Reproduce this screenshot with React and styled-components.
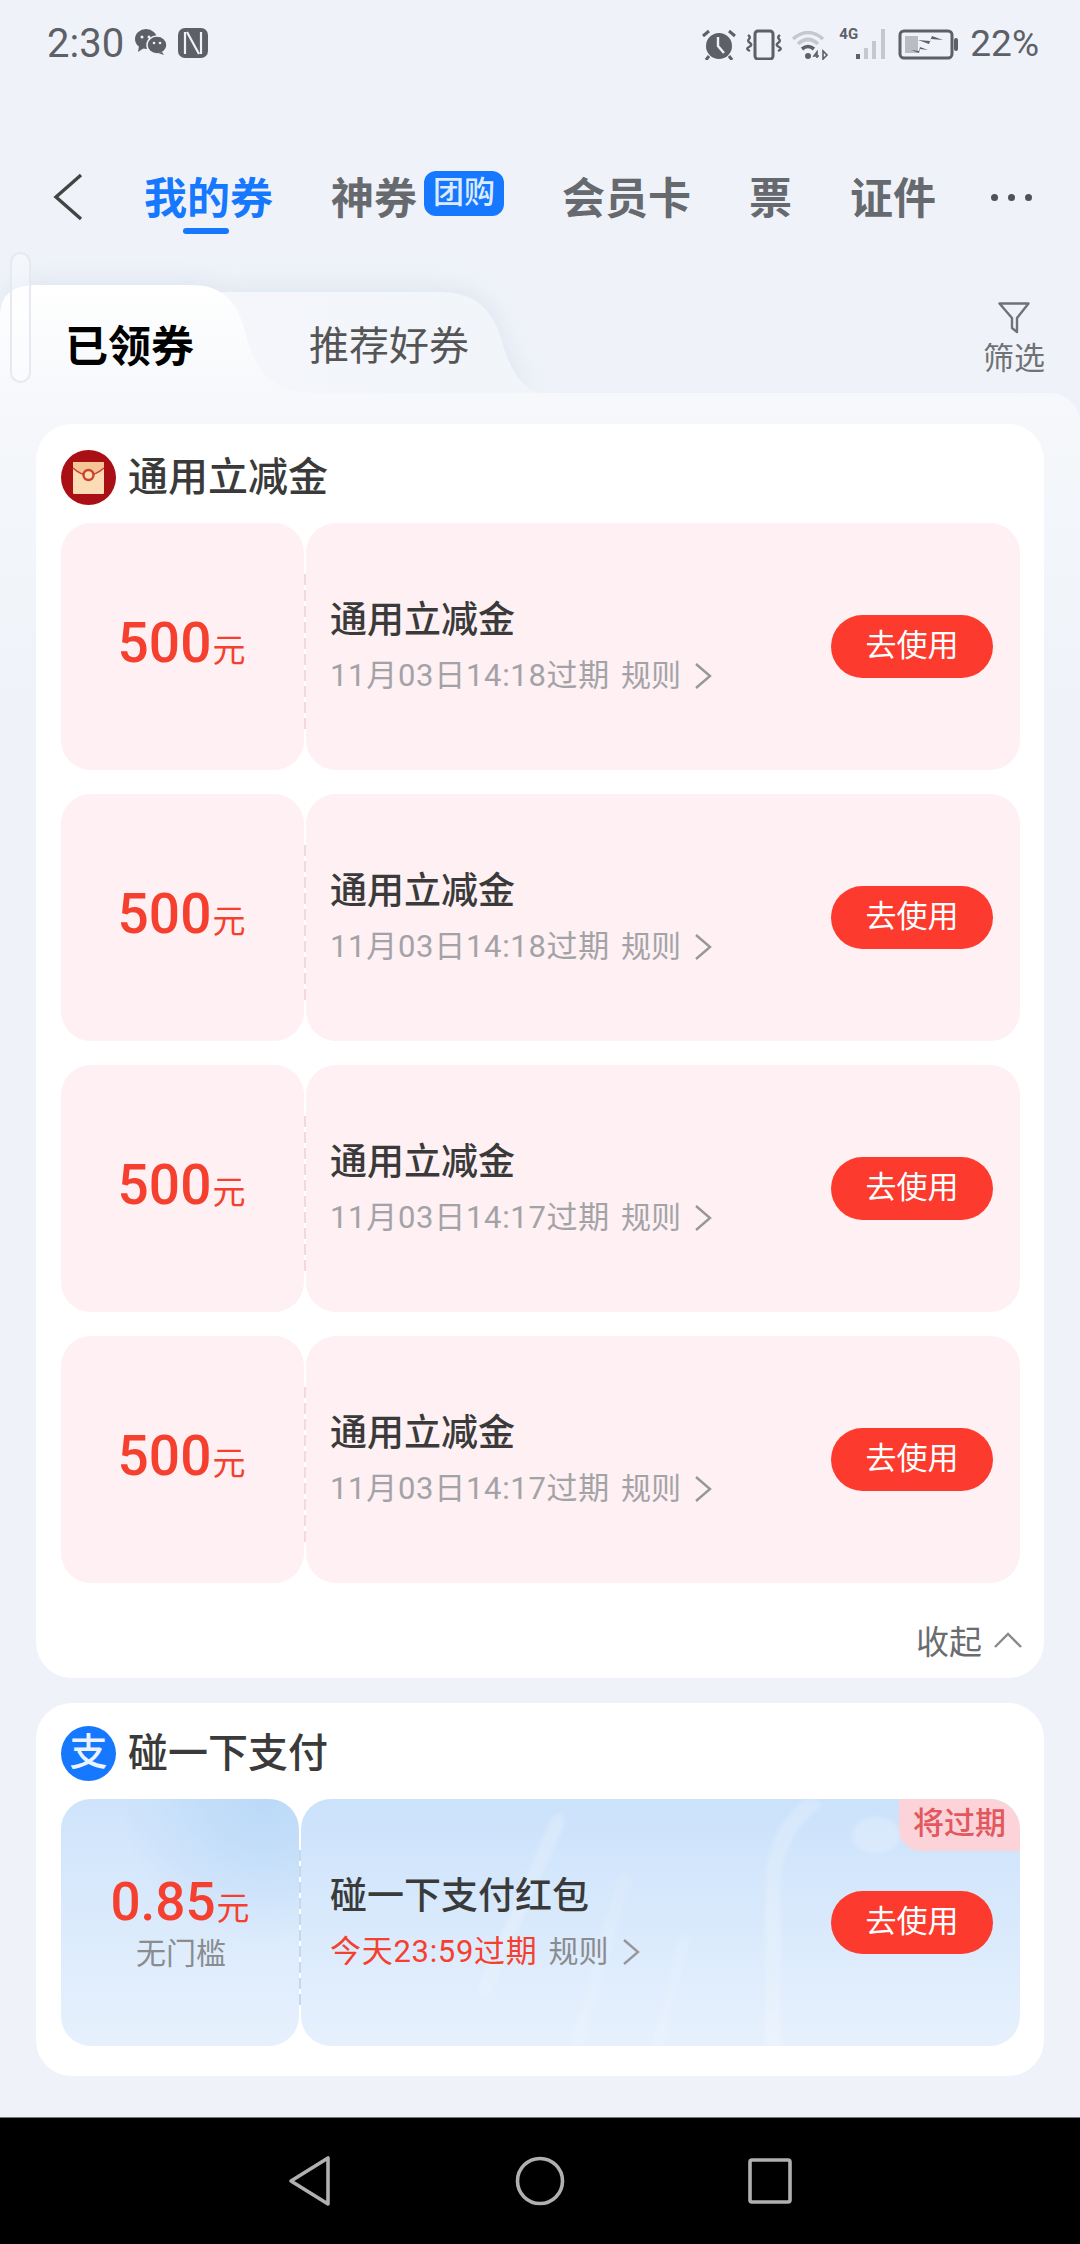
import styled, { createGlobalStyle } from "styled-components";

const coupons = [
  { id: 1, expires: "11月03日14:18过期" },
  { id: 2, expires: "11月03日14:18过期" },
  { id: 3, expires: "11月03日14:17过期" },
  { id: 4, expires: "11月03日14:17过期" },
];

const App = () => {
  return (
    <Page>
      <GlobalStyle />
      <ScrollPill />
      <StatusBar>
        <Time>2:30</Time>
        <WeChatIcon viewBox="0 0 34 26">
          <ellipse cx="12" cy="10" rx="11" ry="10" fill="#5d6066" />
          <path d="M5 17l-1 6 6-4z" fill="#5d6066" />
          <ellipse cx="23" cy="16" rx="10" ry="9" fill="#5d6066" stroke="#eff3f9" strokeWidth="1.5" />
          <path d="M28 23l2 3-6-2z" fill="#5d6066" />
          <circle cx="8" cy="8" r="1.5" fill="#eff3f9" />
          <circle cx="15" cy="8" r="1.5" fill="#eff3f9" />
          <circle cx="20" cy="14" r="1.3" fill="#eff3f9" />
          <circle cx="26" cy="14" r="1.3" fill="#eff3f9" />
        </WeChatIcon>
        <NfcIcon viewBox="0 0 30 30">
          <rect width="30" height="30" rx="7" fill="#5d6066" />
          <path d="M7 4v22M23 4v22M9 4l12 22" fill="none" stroke="#eff3f9" strokeWidth="2.2" />
        </NfcIcon>
        <StatusRight>
          <svg width="34" height="31" viewBox="0 0 34 31">
            <circle cx="17" cy="17" r="13" fill="#5d6066" />
            <path d="M16 8v9l6 7" fill="none" stroke="#eff3f9" strokeWidth="2.4" />
            <path d="M1 7l6-5M33 7l-6-5M7 27l-3 4M27 27l3 4" stroke="#5d6066" strokeWidth="3" />
          </svg>
          <svg width="38" height="31" viewBox="0 0 38 31">
            <rect x="10" y="2" width="18" height="28" rx="3" fill="none" stroke="#5d6066" strokeWidth="3" />
            <path d="M3 6q3 2 1 4t1 4-1 4 1 4M35 6q-3 2-1 4t-1 4 1 4-1 4" fill="none" stroke="#5d6066" strokeWidth="2.4" />
          </svg>
          <svg width="38" height="31" viewBox="0 0 38 31">
            <path d="M1 10q15-13 30 0M6 15q10-9 20 0" fill="none" stroke="#c5c8cd" strokeWidth="3.6" />
            <path d="M10 20q6-5 12 0" fill="none" stroke="#5d6066" strokeWidth="3.6" />
            <circle cx="16" cy="27" r="3" fill="#5d6066" />
            <path d="M25 29v-6l-3 4h5M31 22v8l4-4z" fill="none" stroke="#5d6066" strokeWidth="1.6" />
          </svg>
          <Signal>
            <NetLabel>4G</NetLabel>
            <svg width="33" height="32" viewBox="0 0 33 32">
              <rect x="0" y="26" width="4" height="5" fill="#5d6066" />
              <rect x="8" y="20" width="4" height="11" fill="#c5c8cd" />
              <rect x="16" y="13" width="4" height="18" fill="#c5c8cd" />
              <rect x="25" y="1" width="4" height="30" fill="#c5c8cd" />
            </svg>
          </Signal>
          <svg width="60" height="31" viewBox="0 0 60 31">
            <rect x="2" y="2" width="52" height="27" rx="4" fill="none" stroke="#5d6066" strokeWidth="3" />
            <rect x="7" y="7" width="13" height="17" fill="#b9bcc1" />
            <path d="M20 11l12 1 2-5 11 4-12-1-2 5zM13 21l8 1 1-4 8 3-8-1-1 4z" fill="#5d6066" />
            <rect x="56" y="9" width="4" height="13" rx="2" fill="#5d6066" />
          </svg>
          <Percent>22%</Percent>
        </StatusRight>
      </StatusBar>

      <TopNav>
        <BackIcon width="32" height="48" viewBox="0 0 32 48">
          <path d="M29 2L4 24l25 22" fill="none" stroke="#444" strokeWidth="3.4" />
        </BackIcon>
        <TopTab $active>
          我的券
          <TopTabLine />
        </TopTab>
        <TopTabGroup>
          <TopTab>神券</TopTab>
          <Badge>团购</Badge>
        </TopTabGroup>
        <TopTab>会员卡</TopTab>
        <TopTab>票</TopTab>
        <TopTab>证件</TopTab>
        <MoreDots>
          <span />
          <span />
          <span />
        </MoreDots>
      </TopNav>

      <TabStrip>
        <TabShapes viewBox="0 0 560 108" width="560" height="108">
          <defs>
            <linearGradient id="activeTab" x1="0" y1="0" x2="0" y2="1">
              <stop offset="0" stopColor="#ffffff" />
              <stop offset="1" stopColor="#f6f8fb" />
            </linearGradient>
            <linearGradient id="idleTab" x1="0" y1="0" x2="1" y2="0">
              <stop offset="0" stopColor="#f5f7fb" />
              <stop offset="1" stopColor="#f1f4f9" />
            </linearGradient>
          </defs>
          <path d="M160 108V7H440C470 7 490 20 500 50C510 85 522 108 545 108Z" fill="url(#idleTab)" />
          <path d="M0 108V28Q2 0 36 0H190C225 0 238 18 246 50C256 90 275 108 318 108Z" fill="url(#activeTab)" />
        </TabShapes>
        <SubTab $active>已领券</SubTab>
        <SubTab>推荐好券</SubTab>
        <Filter>
          <svg width="32" height="32" viewBox="0 0 32 32">
            <path d="M1.5 1.5h29L19 16v14l-5-4V16z" fill="none" stroke="#707276" strokeWidth="2.4" strokeLinejoin="round" />
          </svg>
          <FilterLabel>筛选</FilterLabel>
        </Filter>
      </TabStrip>

      <Content>
        <Card $top={26} $bottom={0}>
          <CardHeader>
            <svg width="55" height="55" viewBox="0 0 55 55">
              <circle cx="27.5" cy="27.5" r="27.5" fill="#a90f14" />
              <rect x="12" y="12" width="31" height="32" rx="1" fill="#fbdcb6" />
              <path d="M12 18q15 14 31 0v-6H12z" fill="#f6c596" />
              <path d="M12 18q15 14 31 0" fill="none" stroke="#c8442c" strokeWidth="1.5" />
              <circle cx="27.5" cy="25" r="5" fill="#fbdcb6" stroke="#c8442c" strokeWidth="2.4" />
            </svg>
            <CardTitle>通用立减金</CardTitle>
          </CardHeader>
          <CouponList>
            {coupons.map((item) => {
              return (
                <Coupon key={item.id}>
                  <Amount $width={243}>
                    <AmountRow>
                      <Value>500</Value>
                      <Unit>元</Unit>
                    </AmountRow>
                  </Amount>
                  <Detail>
                    <DetailText>
                      <DetailTitle>通用立减金</DetailTitle>
                      <MetaRow>
                        <Expires>{item.expires}</Expires>
                        <Rule>规则</Rule>
                        <Chevron />
                      </MetaRow>
                    </DetailText>
                    <UseButton>去使用</UseButton>
                  </Detail>
                </Coupon>
              );
            })}
          </CouponList>
          <CollapseRow>
            <span>收起</span>
            <svg width="30" height="18" viewBox="0 0 30 18">
              <path d="M2 16L15 3l13 13" fill="none" stroke="#8a8a8c" strokeWidth="2.4" />
            </svg>
          </CollapseRow>
        </Card>

        <Card $top={23} $bottom={30}>
          <CardHeader>
            <AlipayMark>支</AlipayMark>
            <CardTitle>碰一下支付</CardTitle>
          </CardHeader>
          <Coupon>
            <Amount $width={238} $blue>
              <AmountRow>
                <Value $small>0.85</Value>
                <Unit>元</Unit>
              </AmountRow>
              <Threshold>无门槛</Threshold>
            </Amount>
            <Detail $blue>
              <Streaks viewBox="0 0 720 248" width="720" height="248">
                <path d="M257 22L184 190" stroke="#fff" strokeOpacity=".2" strokeWidth="14" strokeLinecap="round" fill="none" />
                <path d="M323 82L277 240" stroke="#fff" strokeOpacity=".12" strokeWidth="14" strokeLinecap="round" fill="none" />
                <path d="M383 142L357 244" stroke="#fff" strokeOpacity=".12" strokeWidth="12" strokeLinecap="round" fill="none" />
                <path d="M516 0Q476 30 472 80V248" stroke="#fff" strokeOpacity=".2" strokeWidth="16" fill="none" />
                <ellipse cx="575" cy="36" rx="24" ry="18" fill="#fff" fillOpacity=".22" />
              </Streaks>
              <DetailText>
                <DetailTitle>碰一下支付红包</DetailTitle>
                <MetaRow>
                  <Expires $urgent>今天23:59过期</Expires>
                  <Rule $dark>规则</Rule>
                  <Chevron />
                </MetaRow>
              </DetailText>
              <UseButton>去使用</UseButton>
              <ExpiryTag>将过期</ExpiryTag>
            </Detail>
          </Coupon>
        </Card>
      </Content>

      <SystemBar>
        <svg width="44" height="52" viewBox="0 0 44 52">
          <path d="M40 3v46L3 26z" fill="none" stroke="#b0b0b0" strokeWidth="3.6" strokeLinejoin="round" />
        </svg>
        <svg width="50" height="50" viewBox="0 0 50 50">
          <circle cx="25" cy="25" r="22.5" fill="none" stroke="#b0b0b0" strokeWidth="3.6" />
        </svg>
        <svg width="44" height="46" viewBox="0 0 44 46">
          <rect x="2" y="2" width="40" height="42" rx="2" fill="none" stroke="#b0b0b0" strokeWidth="3.6" />
        </svg>
      </SystemBar>
    </Page>
  );
};

const GlobalStyle = createGlobalStyle`
  html, body {
    margin: 0;
    padding: 0;
    background: #eff3f9;
  }
  * {
    box-sizing: border-box;
  }
`;

const fontStack = `Roboto, "Noto Sans CJK SC", sans-serif`;

const Page = styled.div`
  position: relative;
  display: flex;
  flex-direction: column;
  width: 1080px;
  height: 2244px;
  overflow: hidden;
  background: #eff3f9;
  font-family: ${fontStack};
`;

const ScrollPill = styled.div`
  position: absolute;
  left: 10px;
  top: 252px;
  width: 21px;
  height: 131px;
  border: 2px solid #e6e9ef;
  border-radius: 11px;
  background: rgba(255, 255, 255, 0.35);
  z-index: 2;
`;

const StatusBar = styled.div`
  display: flex;
  align-items: center;
  height: 88px;
  padding: 0 41px 0 47px;
  color: #5d6066;
`;

const Time = styled.div`
  font-size: 40px;
  line-height: 40px;
  margin-right: 10px;
`;

const WeChatIcon = styled.svg`
  width: 34px;
  height: 26px;
  margin: -4px 10px 0 0;
`;

const NfcIcon = styled.svg`
  width: 30px;
  height: 30px;
  margin-top: -2px;
`;

const StatusRight = styled.div`
  display: flex;
  align-items: center;
  gap: 9px;
  margin-left: auto;
`;

const Signal = styled.div`
  position: relative;
  width: 50px;
  display: flex;
  justify-content: flex-end;
`;

const NetLabel = styled.span`
  position: absolute;
  left: 0;
  top: -3px;
  font-size: 15px;
  line-height: 18px;
  font-weight: 700;
`;

const Percent = styled.div`
  font-size: 37px;
  line-height: 40px;
  margin-left: 3px;
`;

const TopNav = styled.div`
  display: flex;
  align-items: center;
  gap: 58px;
  height: 100px;
  margin-top: 62px;
  padding: 0 0 2px 52px;
`;

const BackIcon = styled.svg`
  margin-top: -4px;
`;

const TopTabGroup = styled.div`
  display: flex;
  align-items: center;
  gap: 7px;
`;

const TopTab = styled.div`
  position: relative;
  margin-left: ${(props) => (props.$active ? "2px" : "0")};
  font-size: 43px;
  line-height: 50px;
  font-weight: 700;
  color: ${(props) => (props.$active ? "#1677ff" : "#666a6e")};
`;

const TopTabLine = styled.div`
  position: absolute;
  left: 39px;
  top: 54px;
  width: 46px;
  height: 6px;
  border-radius: 3px;
  background: #1677ff;
`;

const Badge = styled.div`
  width: 80px;
  height: 45px;
  margin-top: -11px;
  border-radius: 12px;
  background: #1677ff;
  color: #dcebff;
  font-size: 31px;
  line-height: 43px;
  font-weight: 500;
  text-align: center;
`;

const MoreDots = styled.div`
  display: flex;
  gap: 10px;
  margin-left: -3px;
  margin-top: -4px;

  span {
    width: 7px;
    height: 7px;
    border-radius: 50%;
    background: #4f5257;
  }
`;

const TabStrip = styled.div`
  position: relative;
  display: flex;
  align-items: center;
  gap: 115px;
  height: 108px;
  margin-top: 35px;
  padding: 16px 35px 0 65px;
`;

const TabShapes = styled.svg`
  position: absolute;
  left: 0;
  top: 0;
  filter: drop-shadow(2px -6px 12px rgba(165, 178, 205, 0.18));
`;

const SubTab = styled.div`
  position: relative;
  font-size: ${(props) => (props.$active ? "43px" : "40px")};
  line-height: 50px;
  font-weight: ${(props) => (props.$active ? 700 : 400)};
  color: ${(props) => (props.$active ? "#000" : "#555")};
`;

const Filter = styled.div`
  position: relative;
  align-self: flex-start;
  display: flex;
  flex-direction: column;
  align-items: center;
  gap: 5px;
  margin-left: auto;
  margin-top: 1px;
`;

const FilterLabel = styled.div`
  font-size: 31px;
  line-height: 40px;
  color: #707276;
`;

const Content = styled.div`
  flex: 1;
  position: relative;
  display: flex;
  flex-direction: column;
  gap: 25px;
  padding: 31px 36px 0;
  background: linear-gradient(#f6f8fb, #eff3f9 300px);
  border-radius: 0 30px 0 0;
`;

const Card = styled.div`
  padding: ${(props) => props.$top}px 24px ${(props) => props.$bottom}px 25px;
  border-radius: 36px;
  background: #fff;
`;

const CardHeader = styled.div`
  display: flex;
  align-items: center;
  gap: 12px;
  height: 55px;
  margin-bottom: 18px;
`;

const CardTitle = styled.div`
  font-size: 40px;
  line-height: 50px;
  font-weight: 500;
  color: #3a3a3a;
`;

const AlipayMark = styled.div`
  width: 55px;
  height: 55px;
  border-radius: 50%;
  background: #1677ff;
  color: #eaf3ff;
  font-size: 38px;
  line-height: 52px;
  font-weight: 500;
  text-align: center;
`;

const CouponList = styled.div`
  display: flex;
  flex-direction: column;
  gap: 24px;
`;

const Coupon = styled.div`
  display: flex;
  gap: 2px;
  height: 247px;
`;

const Amount = styled.div`
  position: relative;
  display: flex;
  flex-direction: column;
  align-items: center;
  justify-content: center;
  width: ${(props) => props.$width}px;
  padding: 0 ${(props) => (props.$blue ? "0" : "2px")} ${(props) => (props.$blue ? "0" : "8px")} 0;
  border-radius: 30px;
  background: ${(props) =>
    props.$blue
      ? "radial-gradient(circle at 85% 0, #bbd9f8, transparent 45%), linear-gradient(#cfe4fb, #e7f1fd)"
      : "#fef0f3"};

  &::after {
    content: "";
    position: absolute;
    right: -2px;
    top: 51px;
    width: 2px;
    height: 155px;
    background: repeating-linear-gradient(
      ${(props) => (props.$blue ? "#c5d8ec" : "#f3d9de")} 0 11px,
      transparent 11px 16px
    );
  }
`;

const AmountRow = styled.div`
  display: flex;
  align-items: baseline;
  color: #f5402f;
`;

const Value = styled.span`
  font-size: ${(props) => (props.$small ? "53px" : "55px")};
  line-height: 60px;
  font-weight: 500;
`;

const Unit = styled.span`
  font-size: 33px;
  line-height: 40px;
  margin-left: 1px;
`;

const Threshold = styled.div`
  margin: 2px 0 0 2px;
  font-size: 30px;
  line-height: 40px;
  color: #8a8c90;
`;

const Detail = styled.div`
  position: relative;
  flex: 1;
  display: flex;
  align-items: center;
  justify-content: space-between;
  overflow: hidden;
  padding: 0 27px 0 ${(props) => (props.$blue ? "29px" : "24px")};
  border-radius: 30px;
  background: ${(props) => (props.$blue ? "linear-gradient(#cbe2fb, #e7f1fd)" : "#fef0f3")};
`;

const Streaks = styled.svg`
  position: absolute;
  left: 0;
  top: 0;
  filter: blur(2px);
`;

const DetailText = styled.div`
  position: relative;
  margin-top: -2px;
`;

const DetailTitle = styled.div`
  font-size: 37px;
  line-height: 50px;
  font-weight: 500;
  color: #3a3a3a;
`;

const MetaRow = styled.div`
  display: flex;
  align-items: center;
  margin-top: 10px;
  font-size: 30px;
  line-height: 40px;
`;

const Expires = styled.span`
  font-size: 31px;
  letter-spacing: 0.7px;
  color: ${(props) => (props.$urgent ? "#f5402f" : "#a3a3a7")};
`;

const Rule = styled.span`
  margin-left: 11px;
  color: ${(props) => (props.$dark ? "#8a8c90" : "#a3a3a7")};
`;

const Chevron = () => (
  <ChevronSvg width="20" height="28" viewBox="0 0 20 28">
    <path d="M3 2l14 12L3 26" fill="none" stroke="#97979b" strokeWidth="2.4" />
  </ChevronSvg>
);

const ChevronSvg = styled.svg`
  margin-left: 12px;
`;

const UseButton = styled.div`
  position: relative;
  width: 162px;
  height: 63px;
  border-radius: 32px;
  background: #fc3a2d;
  color: #fff;
  font-size: 31px;
  line-height: 62px;
  text-align: center;
`;

const ExpiryTag = styled.div`
  position: absolute;
  right: 0;
  top: 0;
  width: 121px;
  height: 52px;
  border-radius: 0 30px 0 22px;
  background: #fbd3d8;
  color: #e2585e;
  font-size: 31px;
  line-height: 50px;
  font-weight: 500;
  text-align: center;
`;

const CollapseRow = styled.div`
  display: flex;
  align-items: center;
  justify-content: flex-end;
  gap: 11px;
  height: 95px;
  padding: 18px 0 0;
  margin-right: -3px;
  color: #6a6c70;
  font-size: 33px;
`;

const SystemBar = styled.div`
  position: relative;
  display: flex;
  align-items: center;
  justify-content: center;
  gap: 183px;
  height: 127px;
  margin-top: auto;
  background: #000;
  border-top: 1px solid #777;
`;

export default App;
